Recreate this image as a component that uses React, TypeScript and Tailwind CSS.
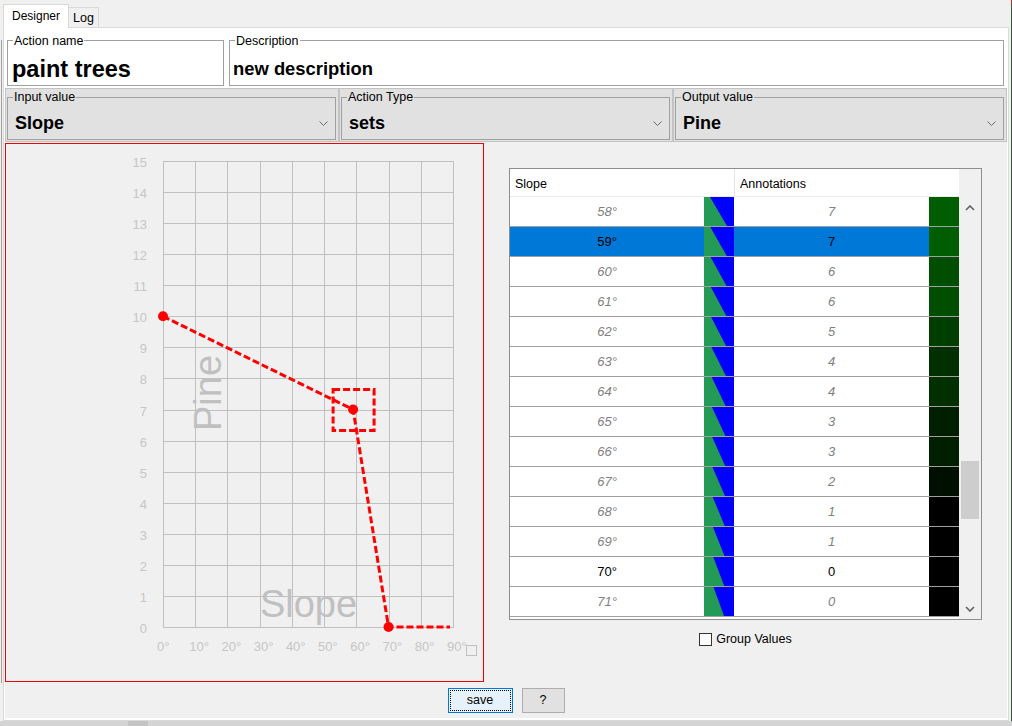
import React from 'react'

type Row = { deg: number; val: number }

const ROWS: Row[] = [
  { deg: 58, val: 7 },
  { deg: 59, val: 7 },
  { deg: 60, val: 6 },
  { deg: 61, val: 6 },
  { deg: 62, val: 5 },
  { deg: 63, val: 4 },
  { deg: 64, val: 4 },
  { deg: 65, val: 3 },
  { deg: 66, val: 3 },
  { deg: 67, val: 2 },
  { deg: 68, val: 1 },
  { deg: 69, val: 1 },
  { deg: 70, val: 0 },
  { deg: 71, val: 0 },
]

const SELECTED_DEG = 59
const PLAIN_DEGS = [59, 70]

const DROPDOWNS = [
  { label: 'Input value', value: 'Slope' },
  { label: 'Action Type', value: 'sets' },
  { label: 'Output value', value: 'Pine' },
]

// chart geometry, in page pixels (svg viewBox matches the page)
const X0 = 163
const X_STEP = 32.22
const Y0 = 627
const Y_STEP = 31.07
const GRID_RIGHT = X0 + 9 * X_STEP
const GRID_TOP = Y0 - 15 * Y_STEP

const POINTS: [number, number][] = [
  [0, 10],
  [59, 7],
  [70, 0],
]

function cn(...parts: (string | false | undefined)[]) {
  return parts.filter(Boolean).join(' ')
}

function px(deg: number) {
  return X0 + (deg / 10) * X_STEP
}

function py(v: number) {
  return Y0 - v * Y_STEP
}

function ChevronDown({ color = '#6d6d6d' }: { readonly color?: string }) {
  return (
    <svg width="9" height="5" viewBox="0 0 9 5" className="block">
      <polyline points="0.5,0.5 4.5,4.5 8.5,0.5" fill="none" stroke={color} strokeWidth="1" />
    </svg>
  )
}

function ScrollChevron({ up }: { readonly up?: boolean }) {
  return (
    <svg width="10" height="6" viewBox="0 0 10 6" className="block">
      <polyline
        points={up ? '1,5 5,1 9,5' : '1,1 5,5 9,1'}
        fill="none"
        stroke="#606060"
        strokeWidth="1.6"
      />
    </svg>
  )
}

function Chart() {
  const xs = Array.from({ length: 10 }, (_, i) => X0 + i * X_STEP)
  const ys = Array.from({ length: 16 }, (_, k) => Y0 - k * Y_STEP)
  const line = [...POINTS.map(([d, v]) => `${px(d)},${py(v)}`), `${GRID_RIGHT - 3},${py(0)}`].join(' ')
  const sel = { x: px(59), y: py(7) }

  return (
    <svg width="477" height="537" viewBox="6 144 477 537" className="block" fontFamily="'Liberation Sans', Arial, sans-serif">
      {ys.map((y, k) => (
        <line key={`h${k}`} x1={X0} x2={GRID_RIGHT} y1={Math.round(y) + 0.5} y2={Math.round(y) + 0.5} stroke="#c0c0c0" strokeWidth="1" />
      ))}
      {xs.map((x, i) => (
        <line key={`v${i}`} x1={Math.round(x) + 0.5} x2={Math.round(x) + 0.5} y1={GRID_TOP} y2={Y0 + 1} stroke="#c0c0c0" strokeWidth="1" />
      ))}
      {ys.map((y, k) => (
        <text key={`yl${k}`} x="147" y={y + 6} textAnchor="end" fontSize="13" fill="#c6c6c6">
          {k}
        </text>
      ))}
      {xs.map((x, i) => (
        <text key={`xl${i}`} x={x - 6} y="651" fontSize="13" fill="#c6c6c6">
          {i * 10}°
        </text>
      ))}
      <rect x="466.5" y="645.5" width="10" height="10" fill="none" stroke="#c0c0c0" strokeWidth="1" />

      <text x="308.5" y="617" textAnchor="middle" fontSize="38" fill="#c0c0c0">
        Slope
      </text>
      <text transform="translate(208 393) rotate(-90)" y="13" textAnchor="middle" fontSize="38" fill="#c0c0c0">
        Pine
      </text>

      <polyline points={line} fill="none" stroke="#ff0000" strokeWidth="3" strokeDasharray="7 3" />
      <rect x={sel.x - 20} y={sel.y - 20} width="41" height="41" fill="none" stroke="#ff0000" strokeWidth="3" strokeDasharray="7 3" />
      {POINTS.map(([d, v]) => (
        <circle key={d} cx={px(d)} cy={py(v)} r="5" fill="#ff0000" />
      ))}
    </svg>
  )
}

function TableRow({ row, index }: { readonly row: Row; readonly index: number }) {
  const selected = row.deg === SELECTED_DEG
  const plain = PLAIN_DEGS.includes(row.deg)
  const textCls = plain ? 'text-black' : 'text-[#7f7f7f] italic'
  const top = 6 + (index / 13) * 3.5
  const bottom = 23 - (index / 13) * 3
  const g = Math.max(0, Math.round((row.val - 1) * 15.5))

  return (
    <div className="flex h-[30px] shrink-0 border-b border-[#a0a0a0] text-[13px]">
      <div className={cn('flex w-[194px] items-center justify-center pt-[1px]', selected ? 'bg-[#0078d7]' : 'bg-white', textCls)}>
        {row.deg}°
      </div>
      <svg width="30" height="29" className="block shrink-0 bg-[#0000ff]">
        <polygon points={`0,0 ${top},0 ${bottom},29 0,29`} fill="#239b56" />
      </svg>
      <div className={cn('flex w-[195px] items-center justify-center pt-[1px]', selected ? 'bg-[#0078d7]' : 'bg-white', textCls)}>
        {row.val}
      </div>
      <div className="w-[30px]" style={{ backgroundColor: `rgb(0, ${g}, 0)` }} />
    </div>
  )
}

function ValueTable() {
  return (
    <div className="flex h-[452px] w-[473px] border border-[#8e8e8e]">
      <div className="flex w-[449px] flex-col">
        <div className="flex h-[28px] shrink-0 border-b border-[#ececec] bg-white text-[12.5px]">
          <div className="flex w-[224px] items-center pl-[5px] pt-[4px]">Slope</div>
          <div className="flex w-[225px] items-center border-l border-[#e5e5e5] pl-[5px] pt-[4px]">Annotations</div>
        </div>
        <div className="flex flex-1 flex-col overflow-hidden bg-white">
          {ROWS.map((row, i) => (
            <TableRow key={row.deg} row={row} index={i} />
          ))}
        </div>
      </div>
      <div className="flex w-[22px] flex-col bg-[#f0f0f0] pt-[28px]">
        <div className="flex h-[22px] items-center justify-center">
          <ScrollChevron up />
        </div>
        <div className="flex-1 px-[2px] pt-[242px]">
          <div className="h-[58px] bg-[#cdcdcd]" />
        </div>
        <div className="flex h-[21px] items-center justify-center">
          <ScrollChevron />
        </div>
      </div>
    </div>
  )
}

export default function App() {
  return (
    <div className="flex h-[726px] w-[1012px] flex-col overflow-hidden bg-[#f0f0f0] font-['Liberation_Sans',Arial,sans-serif] text-black">
      <div className="flex">
        {/* left edge of the neighbouring splitter */}
        <div className="w-[3px] pl-[1px] pt-[40px]">
          <div className="h-[643px] w-[1px] bg-[#a0a0a0]" />
        </div>

        <div className="flex w-[1006px] flex-col">
          {/* tabs */}
          <div className="flex h-[27px] items-end">
            <div className="relative z-10 -mb-[1px] flex h-[24px] w-[66px] items-center justify-center border border-b-0 border-[#d9d9d9] bg-white pb-[1px] text-[12px]">
              Designer
            </div>
            <div className="flex h-[20px] w-[30px] items-center justify-center border border-b-0 border-l-0 border-[#d9d9d9] bg-[#f0f0f0] pt-[2px] text-[12.5px]">
              Log
            </div>
          </div>

          {/* tab page */}
          <div className="flex h-[694px] w-[1006px] flex-col border border-[#d9d9d9] bg-white">
            <div className="flex gap-[5px] pl-[3px] pr-[4px] pt-[5px]">
              <fieldset className="h-[53px] w-[217px] border border-[#a0a0a0]">
                <legend className="ml-[5px] px-[1px] pt-[2px] text-[12.5px] leading-[13px]">Action name</legend>
                <div className="pl-[4px] pt-[7px] text-[23.5px] font-bold leading-[28px]">paint trees</div>
              </fieldset>
              <fieldset className="h-[53px] w-[775px] border border-[#a0a0a0]">
                <legend className="ml-[5px] px-[1px] pt-[2px] text-[12.5px] leading-[13px]">Description</legend>
                <div className="pl-[3px] pt-[10px] text-[18.4px] font-bold leading-[22px]">new description</div>
              </fieldset>
            </div>

            <div className="mt-[2px] flex px-[1px]">
              {DROPDOWNS.map((d) => (
                <div key={d.label} className="h-[54px] w-[334px] border border-[#c3c3c3] bg-[#e1e1e1] pl-[1px] pr-[2px] pt-[1px]">
                  <fieldset className="h-[50px] border border-[#a0a0a0]">
                    <legend className="ml-[5px] px-[1px] pt-[1px] text-[12.5px] leading-[13px]">{d.label}</legend>
                    <div className="flex items-center justify-between pl-[7px] pr-[7px] pt-[8px]">
                      <span className="text-[18px] font-bold leading-[22px]">{d.value}</span>
                      <ChevronDown />
                    </div>
                  </fieldset>
                </div>
              ))}
            </div>

            {/* designer body */}
            <div className="mx-[1px] flex h-[576px] flex-col bg-[#f0f0f0]">
              <div className="mt-[1px] flex">
                <div className="h-[539px] w-[479px] shrink-0 border border-[#f00000]">
                  <Chart />
                </div>
                <div className="ml-[25px] flex w-[473px] flex-col items-center pt-[25px]">
                  <ValueTable />
                  <label className="mt-[10px] flex items-center gap-[4px] text-[12.5px]">
                    <span className="h-[13px] w-[13px] border border-[#333333] bg-white" />
                    Group Values
                  </label>
                </div>
              </div>

              <div className="mt-[6px] flex justify-center gap-[9px]">
                <button className="h-[25px] w-[65px] border border-[#0078d7] bg-[#e5f1fb] text-[12.5px] outline-1 -outline-offset-[3px] outline-dotted outline-black">
                  save
                </button>
                <button className="h-[25px] w-[43px] border border-[#adadad] bg-[#e1e1e1] text-[12.5px]">?</button>
              </div>
            </div>
          </div>
        </div>

        {/* right edge, window behind */}
        <div className="flex w-[3px] justify-end">
          <div className="flex w-[1px] flex-col">
            <div className="h-[5px] bg-[#d02020]" />
            <div className="flex-1 bg-[#2f5a2f]" />
          </div>
        </div>
      </div>

      {/* partially visible scrollbar below */}
      <div className="flex h-[5px] bg-[#d4d4d4] pl-[128px]">
        <div className="w-[20px] bg-[#c4c4c4]" />
      </div>
    </div>
  )
}
